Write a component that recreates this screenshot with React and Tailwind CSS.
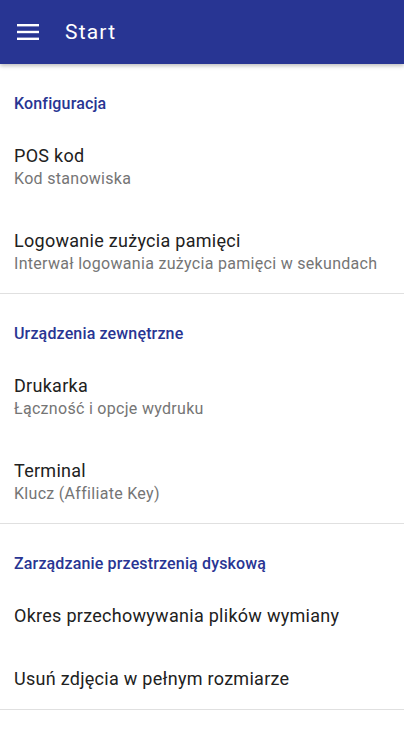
export default function App() {
  const Category = ({ children }) => (
    <div className="pt-[30px] pb-[9px] pl-[14px] text-[16px] leading-[20px] tracking-[0.15px] font-medium text-[#283593]">
      {children}
    </div>
  );
  const Item = ({ title, summary }) => (
    <div className="pt-[21px] pb-[18px] pl-[14px]">
      <div className="text-[18px] leading-[24px] tracking-[0.28px] text-[#212121]">{title}</div>
      {summary && <div className="text-[16px] leading-[22px] tracking-[0.3px] text-[#757575]">{summary}</div>}
    </div>
  );
  const Divider = () => <div className="h-px bg-[#e0e0e0]" />;
  return (
    <div className="w-[404px] h-[735px] bg-white overflow-hidden" style={{ fontFamily: "Roboto, 'Noto Sans', sans-serif" }}>
      <div className="relative z-10 h-[64px] bg-[#283593] flex items-center shadow-[0_2px_4px_rgba(0,0,0,0.25)]">
        <div className="w-[65px] flex pl-[17px]">
          <svg width="22" height="16" viewBox="0 0 22 16">
            <rect x="0" y="0" width="22" height="2.4" fill="white" />
            <rect x="0" y="6.8" width="22" height="2.4" fill="white" />
            <rect x="0" y="13.6" width="22" height="2.4" fill="white" />
          </svg>
        </div>
        <div className="text-white text-[21px] leading-none tracking-[1.2px]">Start</div>
      </div>
      <Category>Konfiguracja</Category>
      <Item title="POS kod" summary="Kod stanowiska" />
      <Item title="Logowanie zużycia pamięci" summary="Interwał logowania zużycia pamięci w sekundach" />
      <Divider />
      <Category>Urządzenia zewnętrzne</Category>
      <Item title="Drukarka" summary="Łączność i opcje wydruku" />
      <Item title="Terminal" summary="Klucz (Affiliate Key)" />
      <Divider />
      <Category>Zarządzanie przestrzenią dyskową</Category>
      <Item title="Okres przechowywania plików wymiany" />
      <Item title="Usuń zdjęcia w pełnym rozmiarze" />
      <Divider />
    </div>
  );
}
